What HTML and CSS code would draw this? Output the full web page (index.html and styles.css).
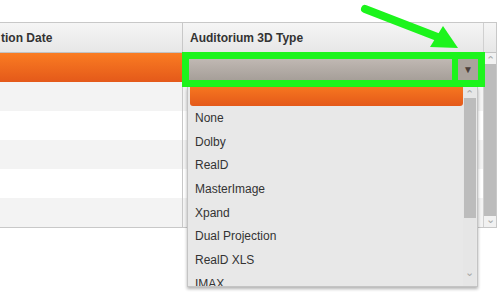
FILE: index.html
```html
<!DOCTYPE html>
<html lang="en">
<head>
    <meta charset="UTF-8">
    <title>Auditorium Grid</title>
    <link rel="stylesheet" href="styles.css">
</head>
<body>
    <div class="grid">
        <div class="grid-head">
            <div class="hcell c1">tion Date</div>
            <div class="hcell c2">Auditorium 3D Type</div>
            <div class="hcell c3"></div>
        </div>
        <div class="grid-body">
            <div class="rows">
                <div class="row selected"><div class="cell c1"></div><div class="cell c2"></div></div>
                <div class="row alt"><div class="cell c1"></div><div class="cell c2"></div></div>
                <div class="row"><div class="cell c1"></div><div class="cell c2"></div></div>
                <div class="row alt"><div class="cell c1"></div><div class="cell c2"></div></div>
                <div class="row"><div class="cell c1"></div><div class="cell c2"></div></div>
                <div class="row alt"><div class="cell c1"></div><div class="cell c2"></div></div>
            </div>
            <div class="vscroll">
                <span class="sarrow">&#8963;</span>
                <div class="thumb"></div>
                <span class="sarrow down">&#8964;</span>
            </div>
        </div>
    </div>

    <!-- highlighted editor -->
    <div class="editor">
        <div class="select-face"></div>
        <div class="select-btn">&#9660;</div>
    </div>

    <div class="dropdown">
        <div class="options">
            <div class="opt-selected"></div>
            <div class="opt">None</div>
            <div class="opt">Dolby</div>
            <div class="opt">RealD</div>
            <div class="opt">MasterImage</div>
            <div class="opt">Xpand</div>
            <div class="opt">Dual Projection</div>
            <div class="opt">RealD XLS</div>
            <div class="opt">IMAX</div>
        </div>
        <div class="list-scroll">
            <span class="sarrow">&#8963;</span>
            <div class="thumb"></div>
            <span class="sarrow down">&#8964;</span>
        </div>
    </div>

    <svg class="pointer" width="500" height="297" viewBox="0 0 500 297">
        <line x1="365" y1="9" x2="440" y2="38" stroke="#1cf41c" stroke-width="8" stroke-linecap="round"/>
        <polygon points="458,48 443,26 430,47" fill="#1cf41c"/>
    </svg>
</body>
</html>
```

FILE: styles.css
```css
body {
    margin: 0;
    font-family: 'Liberation Sans', Arial, sans-serif;
    font-size: 12px;
    color: #333;
    background: #fff;
    position: relative;
    width: 500px;
    height: 297px;
    overflow: hidden;
}
.grid {
    margin-top: 22px;
    width: 497px;
    box-sizing: border-box;
    border-top: 1px solid #c8c8c8;
    border-right: 1px solid #c8c8c8;
    border-bottom: 1px solid #c8c8c8;
}
.grid-head {
    display: flex;
    height: 29px;
    border-bottom: 1px solid #c2c2c2;
    background: linear-gradient(#f5f5f5, #e7e7e7);
}
.hcell {
    display: flex;
    align-items: center;
    font-weight: bold;
    box-sizing: border-box;
}
.c1 {
    width: 183px;
    padding-left: 1px;
    border-right: 1px solid #c8c8c8;
    box-sizing: border-box;
}
.c2 {
    width: 301px;
    padding-left: 7px;
    border-right: 1px solid #d0d0d0;
    box-sizing: border-box;
}
.c3 {
    flex: 1;
}
.grid-body {
    display: flex;
}
.rows {
    width: 484px;
}
.row {
    display: flex;
    height: 29px;
    background: #fff;
}
.row.alt {
    background: #f3f3f3;
}
.row.selected {
    background: linear-gradient(#fa7c22, #e4591a);
}
.cell {
    height: 100%;
}
.vscroll {
    flex: 1;
    display: flex;
    flex-direction: column;
    align-items: center;
    background: #f1f1f1;
}
.vscroll .thumb {
    flex: 1;
    width: 12px;
    margin-left: -1px;
    background: #bcbcbc;
}
.sarrow {
    height: 11px;
    line-height: 14px;
    font-size: 11px;
    color: #a8a8a8;
}
.sarrow.down {
    line-height: 6px;
}
.editor {
    position: absolute;
    left: 182px;
    top: 52px;
    width: 303px;
    height: 35px;
    box-sizing: border-box;
    border: 7px solid #1cf41c;
    background: #1cf41c;
    display: flex;
    gap: 6px;
}
.select-face {
    flex: 1;
    background: linear-gradient(#c0b8b3, #a69f99);
}
.select-btn {
    width: 20px;
    background: #aaa29c;
    color: #4a3f3a;
    font-size: 10px;
    display: flex;
    align-items: center;
    justify-content: center;
}
.dropdown {
    position: absolute;
    left: 187px;
    top: 87px;
    width: 291px;
    height: 200px;
    box-sizing: border-box;
    border: 1px solid #c4c4c4;
    border-top: none;
    background: #e8e8e8;
    box-shadow: 0 2px 3px rgba(0, 0, 0, 0.3);
    display: flex;
    overflow: hidden;
}
.options {
    flex: 1;
    padding-left: 2px;
}
.opt-selected {
    height: 19px;
    margin-bottom: 1px;
    background: linear-gradient(#f6761f, #e4591a);
    border-radius: 0 0 3px 3px;
}
.opt {
    height: 23.7px;
    line-height: 23.7px;
    padding-left: 5px;
    font-size: 12px;
    color: #333;
    white-space: nowrap;
}
.list-scroll {
    width: 13px;
    margin-right: 1px;
    display: flex;
    flex-direction: column;
    align-items: center;
    background: #e6e6e6;
}
.list-scroll .thumb {
    height: 120px;
    width: 12px;
    background: #bcbcbc;
}
.list-scroll .sarrow.down {
    margin-top: auto;
    margin-bottom: 6px;
}
.pointer {
    position: absolute;
    left: 0;
    top: 0;
}
```
